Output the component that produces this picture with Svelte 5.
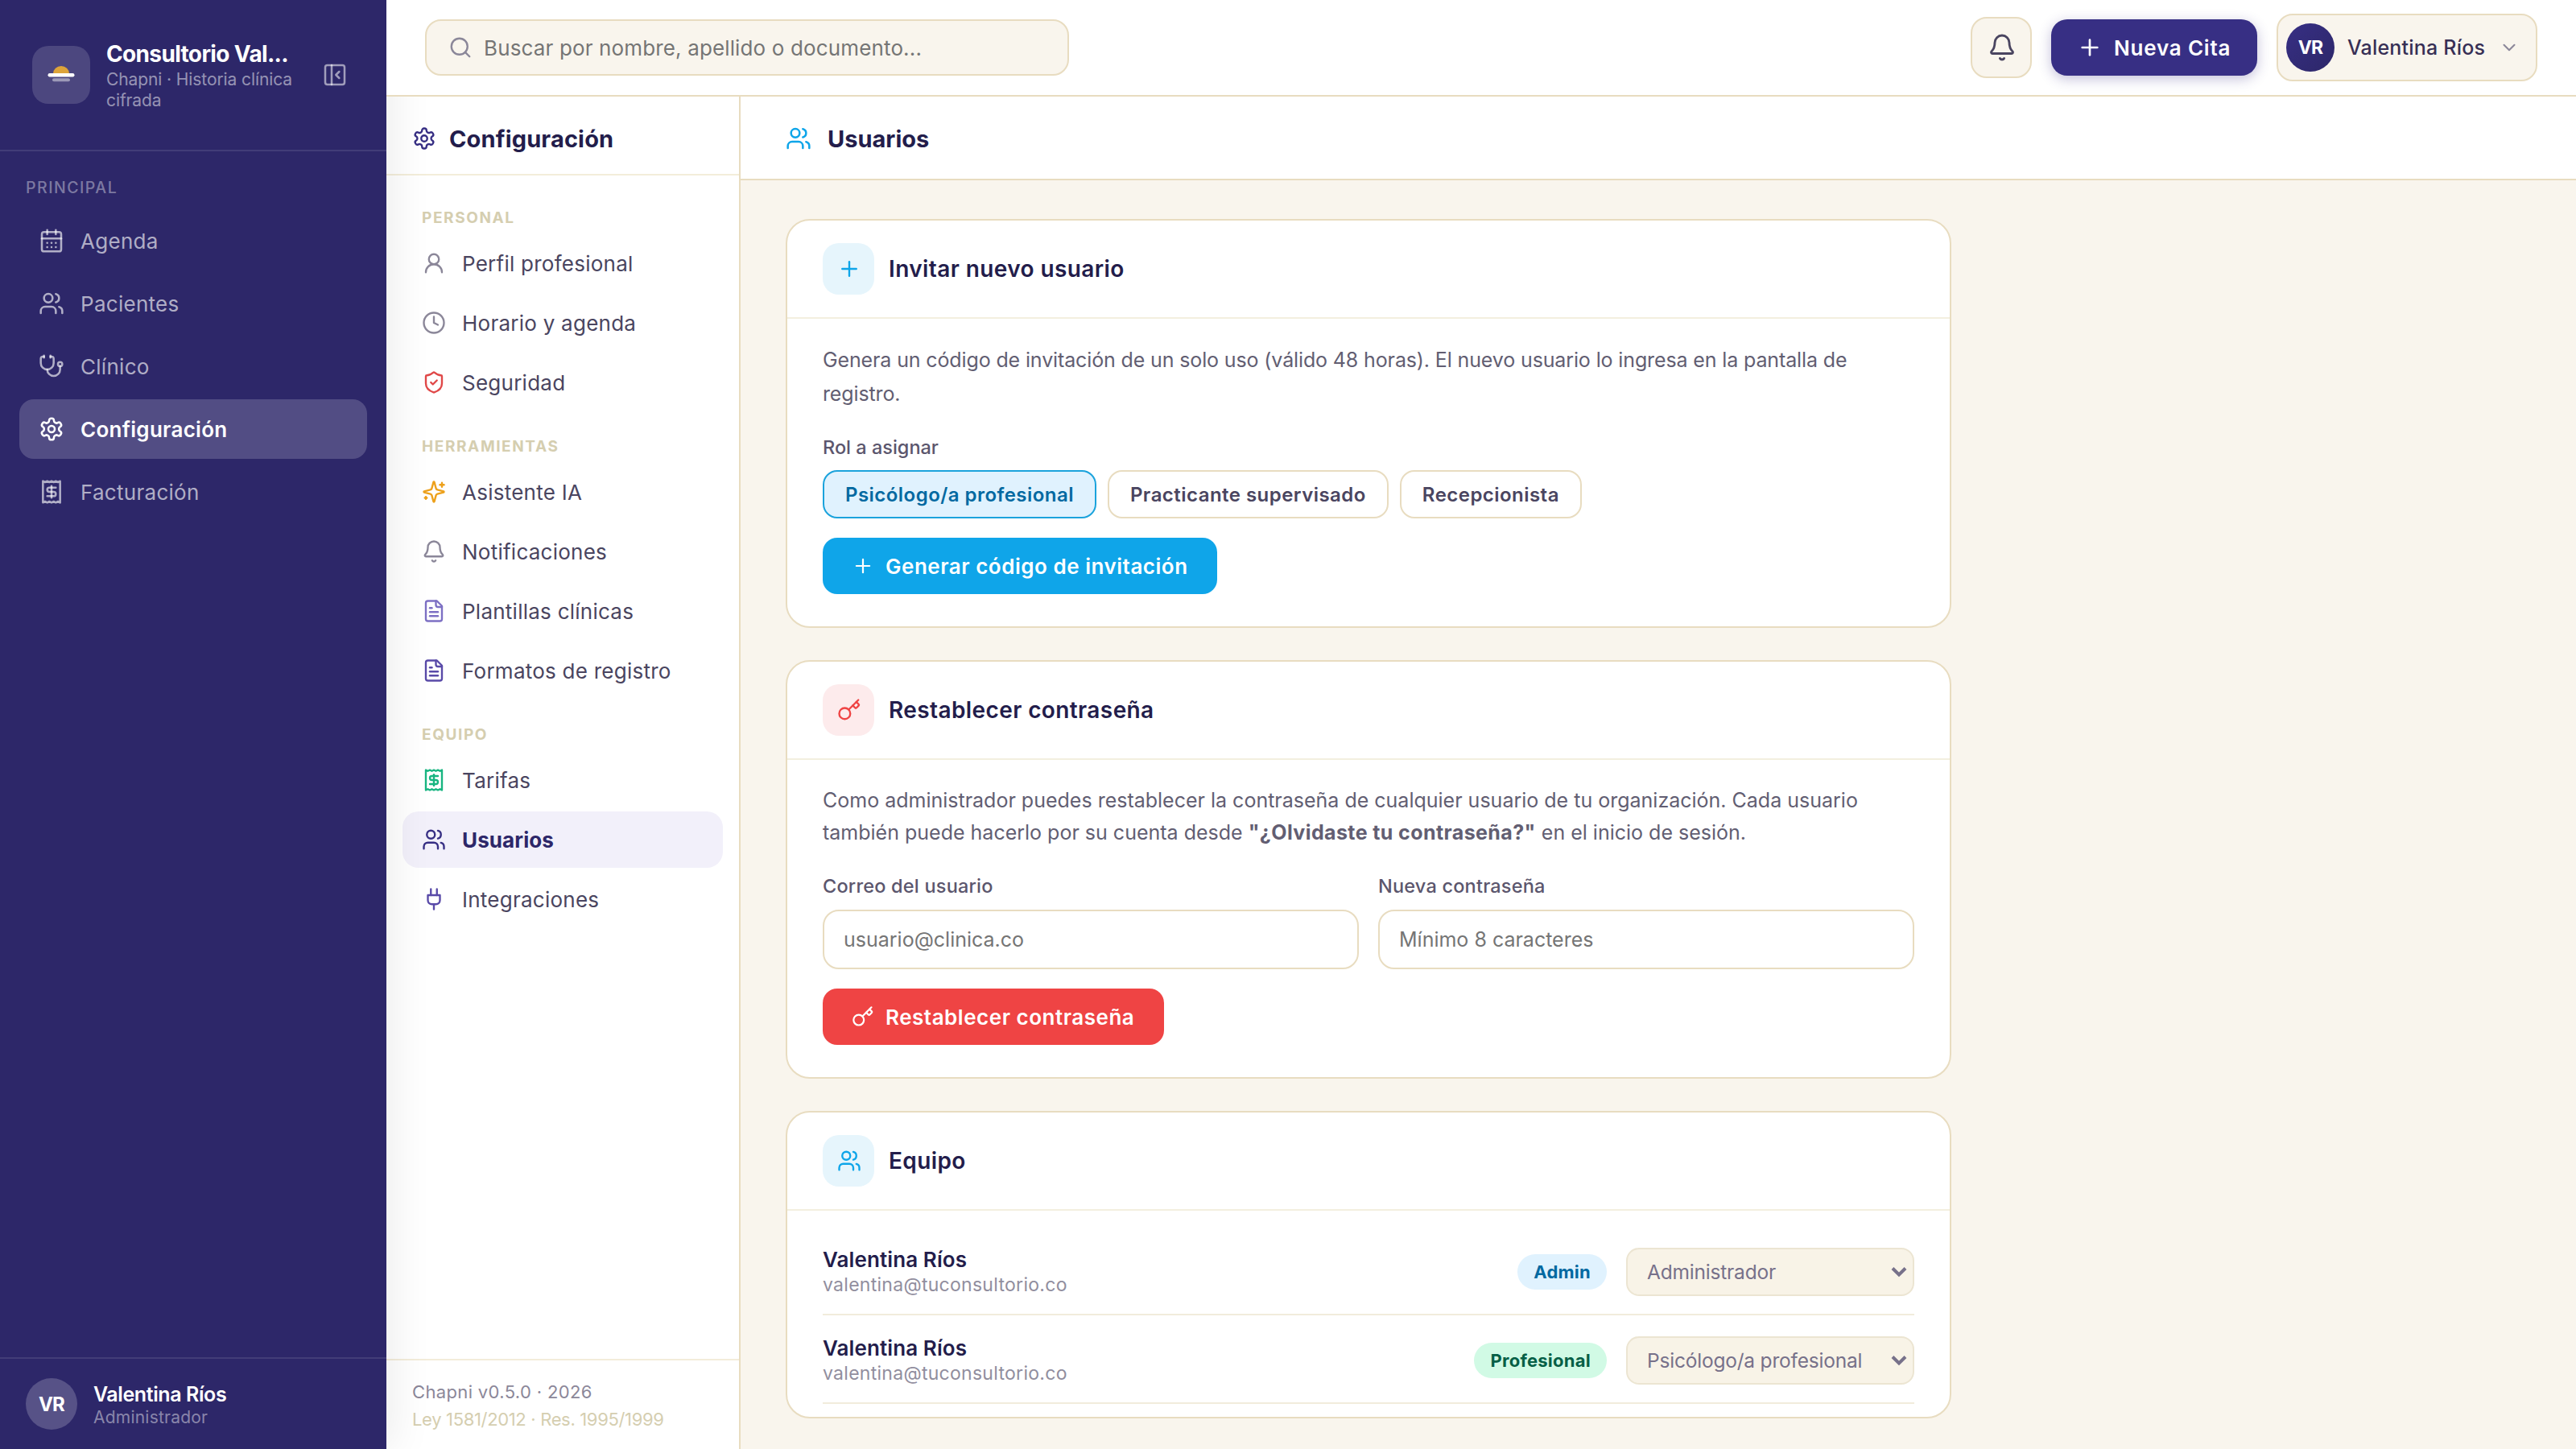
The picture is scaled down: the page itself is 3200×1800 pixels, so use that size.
<script lang="ts">
    type Item = { label: string; icon: string; color?: string; active?: boolean };

    const icons: Record<string, string> = {
        calendar:
            '<path d="M8 2v4"/><path d="M16 2v4"/><rect width="18" height="18" x="3" y="4" rx="2"/><path d="M3 10h18"/><path d="M8 14h.01"/><path d="M12 14h.01"/><path d="M16 14h.01"/><path d="M8 18h.01"/><path d="M12 18h.01"/><path d="M16 18h.01"/>',
        users: '<path d="M16 21v-2a4 4 0 0 0-4-4H6a4 4 0 0 0-4 4v2"/><circle cx="9" cy="7" r="4"/><path d="M22 21v-2a4 4 0 0 0-3-3.87"/><path d="M16 3.13a4 4 0 0 1 0 7.75"/>',
        stethoscope:
            '<path d="M11 2v2"/><path d="M5 2v2"/><path d="M5 3H4a2 2 0 0 0-2 2v4a6 6 0 0 0 12 0V5a2 2 0 0 0-2-2h-1"/><path d="M8 15a6 6 0 0 0 12 0v-3"/><circle cx="20" cy="10" r="2"/>',
        settings:
            '<path d="M12.22 2h-.44a2 2 0 0 0-2 2v.18a2 2 0 0 1-1 1.73l-.43.25a2 2 0 0 1-2 0l-.15-.08a2 2 0 0 0-2.73.73l-.22.38a2 2 0 0 0 .73 2.73l.15.1a2 2 0 0 1 1 1.72v.51a2 2 0 0 1-1 1.74l-.15.09a2 2 0 0 0-.73 2.73l.22.38a2 2 0 0 0 2.73.73l.15-.08a2 2 0 0 1 2 0l.43.25a2 2 0 0 1 1 1.73V20a2 2 0 0 0 2 2h.44a2 2 0 0 0 2-2v-.18a2 2 0 0 1 1-1.73l.43-.25a2 2 0 0 1 2 0l.15.08a2 2 0 0 0 2.73-.73l.22-.39a2 2 0 0 0-.73-2.73l-.15-.08a2 2 0 0 1-1-1.74v-.5a2 2 0 0 1 1-1.74l.15-.09a2 2 0 0 0 .73-2.73l-.22-.38a2 2 0 0 0-2.73-.73l-.15.08a2 2 0 0 1-2 0l-.43-.25a2 2 0 0 1-1-1.73V4a2 2 0 0 0-2-2z"/><circle cx="12" cy="12" r="3"/>',
        receipt:
            '<path d="M4 2v20l2-1 2 1 2-1 2 1 2-1 2 1 2-1 2 1V2l-2 1-2-1-2 1-2-1-2 1-2-1-2 1Z"/><path d="M16 8h-6a2 2 0 1 0 0 4h4a2 2 0 1 1 0 4H8"/><path d="M12 17.5v-11"/>',
        panel: '<rect width="18" height="18" x="3" y="3" rx="2"/><path d="M9 3v18"/><path d="m16 15-3-3 3-3"/>',
        search: '<circle cx="11" cy="11" r="8"/><path d="m21 21-4.3-4.3"/>',
        bell: '<path d="M10.268 21a2 2 0 0 0 3.464 0"/><path d="M3.262 15.326A1 1 0 0 0 4 17h16a1 1 0 0 0 .74-1.673C19.41 13.956 18 12.499 18 8A6 6 0 0 0 6 8c0 4.499-1.411 5.956-2.738 7.326"/>',
        plus: '<path d="M5 12h14"/><path d="M12 5v14"/>',
        chevron: '<path d="m6 9 6 6 6-6"/>',
        user: '<circle cx="12" cy="8" r="5"/><path d="M20 21a8 8 0 0 0-16 0"/>',
        clock: '<circle cx="12" cy="12" r="10"/><path d="M12 6v6l4 2"/>',
        shield: '<path d="M20 13c0 5-3.5 7.5-7.66 8.95a1 1 0 0 1-.67-.01C7.5 20.5 4 18 4 13V6a1 1 0 0 1 1-1c2 0 4.5-1.2 6.24-2.72a1.17 1.17 0 0 1 1.52 0C14.51 3.81 17 5 19 5a1 1 0 0 1 1 1z"/><path d="m9 12 2 2 4-4"/>',
        sparkles:
            '<path d="M9.937 15.5A2 2 0 0 0 8.5 14.063l-6.135-1.582a.5.5 0 0 1 0-.962L8.5 9.936A2 2 0 0 0 9.937 8.5l1.582-6.135a.5.5 0 0 1 .963 0L14.063 8.5A2 2 0 0 0 15.5 9.937l6.135 1.581a.5.5 0 0 1 0 .964L15.5 14.063a2 2 0 0 0-1.437 1.437l-1.582 6.135a.5.5 0 0 1-.963 0z"/><path d="M20 3v4"/><path d="M22 5h-4"/><path d="M4 17v2"/><path d="M5 18H3"/>',
        file: '<path d="M15 2H6a2 2 0 0 0-2 2v16a2 2 0 0 0 2 2h12a2 2 0 0 0 2-2V7Z"/><path d="M14 2v4a2 2 0 0 0 2 2h4"/><path d="M10 9H8"/><path d="M16 13H8"/><path d="M16 17H8"/>',
        plug: '<path d="M12 22v-5"/><path d="M9 8V2"/><path d="M15 8V2"/><path d="M18 8v5a4 4 0 0 1-4 4h-4a4 4 0 0 1-4-4V8Z"/>',
        key: '<circle cx="7.5" cy="15.5" r="5.5"/><path d="m21 2-9.6 9.6"/><path d="m15.5 7.5 2.3 2.3a1 1 0 0 0 1.4 0l2.1-2.1a1 1 0 0 0 0-1.4L19 4"/>',
    };

    const nav: Item[] = [
        { label: "Agenda", icon: "calendar" },
        { label: "Pacientes", icon: "users" },
        { label: "Clínico", icon: "stethoscope" },
        { label: "Configuración", icon: "settings", active: true },
        { label: "Facturación", icon: "receipt" },
    ];

    const groups: { title: string; items: Item[] }[] = [
        {
            title: "Personal",
            items: [
                { label: "Perfil profesional", icon: "user", color: "#8b8799" },
                { label: "Horario y agenda", icon: "clock", color: "#8b8799" },
                { label: "Seguridad", icon: "shield", color: "#e04848" },
            ],
        },
        {
            title: "Herramientas",
            items: [
                { label: "Asistente IA", icon: "sparkles", color: "#eda11c" },
                { label: "Notificaciones", icon: "bell", color: "#8b8799" },
                { label: "Plantillas clínicas", icon: "file", color: "#7d70c4" },
                { label: "Formatos de registro", icon: "file", color: "#594aa8" },
            ],
        },
        {
            title: "Equipo",
            items: [
                { label: "Tarifas", icon: "receipt", color: "#18b581" },
                { label: "Usuarios", icon: "users", color: "#372f84", active: true },
                { label: "Integraciones", icon: "plug", color: "#594aa8" },
            ],
        },
    ];

    const team = [
        { badge: "Admin", kind: "admin", role: "Administrador" },
        { badge: "Profesional", kind: "pro", role: "Psicólogo/a profesional" },
    ];

    const roles = [
        "Psicólogo/a profesional",
        "Practicante supervisado",
        "Recepcionista",
    ];
    let role = $state(roles[0]);
</script>

{#snippet icon(name: string, size: number, stroke = 1.9)}
    <svg
        class="icon"
        width={size}
        height={size}
        viewBox="0 0 24 24"
        fill="none"
        stroke="currentColor"
        stroke-width={stroke}
        stroke-linecap="round"
        stroke-linejoin="round"
    >
        {@html icons[name]}
    </svg>
{/snippet}

{#snippet cardHead(name: string, title: string, tone: string)}
    <header class="card-head">
        <span class="tile {tone}">{@render icon(name, 30)}</span>
        <h2>{title}</h2>
    </header>
{/snippet}

<div class="app">
    <aside class="sidebar">
        <div class="brand">
            <div class="logo">
                <svg width="40" height="24" viewBox="0 0 40 24">
                    <path d="M10 10.5a10 9.5 0 0 1 20 0z" fill="#dda43a" />
                    <rect x="3.5" y="10" width="33" height="4.4" rx="2.2" fill="#fff" />
                    <rect x="9" y="16.2" width="22" height="4" rx="2" fill="#fff" opacity="0.45" />
                </svg>
            </div>
            <div class="brand-text">
                <strong>Consultorio Val...</strong>
                <span>Chapni · Historia clínica<br />cifrada</span>
            </div>
            <span class="collapse">{@render icon("panel", 32)}</span>
        </div>
        <nav class="nav">
            <div class="nav-title">PRINCIPAL</div>
            {#each nav as item}
                <div class="nav-item" class:active={item.active}>
                    {@render icon(item.icon, 32)}
                    <span>{item.label}</span>
                </div>
            {/each}
        </nav>
        <div class="account">
            <span class="account-avatar">VR</span>
            <div class="account-text">
                <strong>Valentina Ríos</strong>
                <span>Administrador</span>
            </div>
        </div>
    </aside>

    <div class="page">
        <header class="topbar">
            <div class="search">
                {@render icon("search", 30)}
                <span>Buscar por nombre, apellido o documento...</span>
            </div>
            <div class="actions">
                <div class="bell">{@render icon("bell", 36)}</div>
                <div class="new">
                    {@render icon("plus", 32, 2)}
                    <span>Nueva Cita</span>
                </div>
                <div class="user">
                    <span class="user-avatar">VR</span>
                    <span class="user-name">Valentina Ríos</span>
                    {@render icon("chevron", 26)}
                </div>
            </div>
        </header>

        <div class="body">
            <aside class="settings">
                <div class="settings-head">
                    {@render icon("settings", 30)}
                    <span>Configuración</span>
                </div>
                <div class="settings-list">
                    {#each groups as group}
                        <div class="group-title">{group.title}</div>
                        {#each group.items as item}
                            <div class="entry" class:active={item.active}>
                                <span class="entry-icon" style="color: {item.color}">
                                    {@render icon(item.icon, 30)}
                                </span>
                                <span>{item.label}</span>
                            </div>
                        {/each}
                    {/each}
                </div>
                <div class="settings-foot">
                    <span class="version">Chapni v0.5.0 · 2026</span>
                    <span class="law">Ley 1581/2012 · Res. 1995/1999</span>
                </div>
            </aside>

            <main class="main">
                <div class="main-head">
                    {@render icon("users", 32)}
                    <h1>Usuarios</h1>
                </div>
                <div class="cards">
                    <section class="card">
                        {@render cardHead("plus", "Invitar nuevo usuario", "sky")}
                        <div class="card-body">
                            <p class="intro">
                                Genera un código de invitación de un solo uso (válido 48 horas). El nuevo usuario lo ingresa en la pantalla de<br />registro.
                            </p>
                            <div class="label role-label">Rol a asignar</div>
                            <div class="chips">
                                {#each roles as r}
                                    <button class="chip" class:selected={r === role} onclick={() => (role = r)}>{r}</button>
                                {/each}
                            </div>
                            <div class="btn primary">
                                {@render icon("plus", 28)}
                                <span>Generar código de invitación</span>
                            </div>
                        </div>
                    </section>

                    <section class="card">
                        {@render cardHead("key", "Restablecer contraseña", "rose")}
                        <div class="card-body">
                            <p class="reset-text">
                                Como administrador puedes restablecer la contraseña de cualquier usuario de tu organización. Cada usuario<br />también puede hacerlo por su cuenta desde <b>"¿Olvidaste tu contraseña?"</b> en el inicio de sesión.
                            </p>
                            <div class="fields">
                                <label class="field">
                                    <span class="label">Correo del usuario</span>
                                    <input type="email" placeholder="usuario@clinica.co" />
                                </label>
                                <label class="field">
                                    <span class="label">Nueva contraseña</span>
                                    <input type="password" placeholder="Mínimo 8 caracteres" />
                                </label>
                            </div>
                            <div class="btn danger">
                                {@render icon("key", 28)}
                                <span>Restablecer contraseña</span>
                            </div>
                        </div>
                    </section>

                    <section class="card">
                        {@render cardHead("users", "Equipo", "sky")}
                        <div class="team">
                            {#each team as member}
                                <div class="member">
                                    <div class="member-info">
                                        <strong>Valentina Ríos</strong>
                                        <span>valentina@tuconsultorio.co</span>
                                    </div>
                                    <span class="badge {member.kind}">{member.badge}</span>
                                    <div class="select">
                                        <span>{member.role}</span>
                                        <svg width="20" height="14" viewBox="0 0 20 14" fill="none" stroke="currentColor" stroke-width="4">
                                            <path d="M2 2.5l8 8 8-8" />
                                        </svg>
                                    </div>
                                </div>
                            {/each}
                        </div>
                    </section>
                </div>
            </main>
        </div>
    </div>
</div>

<style>
    :global(body) {
        margin: 0;
    }
    .app {
        display: flex;
        width: 3200px;
        height: 1800px;
        overflow: hidden;
        background: #f9f5ed;
        color: #231d4b;
        font-family: Inter, "Open Sans", sans-serif;
        font-size: 26px;
        white-space: nowrap;
    }
    .app *,
    .app {
        box-sizing: border-box;
    }
    h1,
    h2,
    p {
        margin: 0;
    }
    .icon {
        display: block;
        flex: none;
    }

    /* sidebar */
    .sidebar {
        position: relative;
        z-index: 1;
        display: flex;
        flex-direction: column;
        width: 480px;
        flex: none;
        background: #2d2769;
        color: #fff;
        box-shadow: 8px 0 48px rgba(0, 0, 0, 0.08);
    }
    .brand {
        display: flex;
        align-items: center;
        height: 188px;
        padding: 0 48px 0 40px;
        border-bottom: 2px solid rgba(255, 255, 255, 0.1);
    }
    .logo {
        display: flex;
        align-items: center;
        justify-content: center;
        width: 72px;
        height: 72px;
        border-radius: 20px;
        background: rgba(255, 255, 255, 0.15);
    }
    .brand-text {
        display: flex;
        flex-direction: column;
        flex: 1;
        margin-left: 20px;
    }
    .brand-text strong {
        font-size: 28px;
        font-weight: 700;
        line-height: 36px;
        letter-spacing: -0.65px;
    }
    .brand-text span {
        margin-top: 1px;
        color: rgba(255, 255, 255, 0.5);
        font-size: 21px;
        line-height: 26px;
        letter-spacing: -0.1px;
    }
    .collapse {
        color: rgba(255, 255, 255, 0.55);
    }
    .nav {
        display: flex;
        flex-direction: column;
        gap: 4px;
        flex: 1;
        padding: 30px 24px 0;
    }
    .nav-title {
        height: 40px;
        padding-left: 8px;
        color: rgba(255, 255, 255, 0.4);
        font-size: 19.5px;
        font-weight: 500;
        line-height: 31px;
        letter-spacing: 1.5px;
    }
    .nav-item {
        display: flex;
        align-items: center;
        gap: 20px;
        height: 74px;
        padding: 0 24px;
        border-radius: 18px;
        color: rgba(255, 255, 255, 0.63);
        font-size: 26px;
        letter-spacing: 0.28px;
    }
    .nav-item.active {
        background: rgba(255, 255, 255, 0.18);
        color: #fff;
        font-weight: 600;
    }
    .account {
        display: flex;
        align-items: center;
        gap: 20px;
        height: 114px;
        padding: 0 32px;
        border-top: 2px solid rgba(255, 255, 255, 0.1);
    }
    .account-avatar {
        display: flex;
        align-items: center;
        justify-content: center;
        width: 64px;
        height: 64px;
        border-radius: 50%;
        background: rgba(255, 255, 255, 0.2);
        font-size: 24px;
        font-weight: 700;
        letter-spacing: -0.8px;
    }
    .account-text {
        display: flex;
        flex-direction: column;
        padding-top: 4px;
    }
    .account-text strong {
        font-size: 25px;
        font-weight: 600;
        line-height: 30px;
        letter-spacing: -0.4px;
    }
    .account-text span {
        color: rgba(255, 255, 255, 0.45);
        font-size: 21px;
        line-height: 28px;
        letter-spacing: 0.22px;
    }

    /* top bar */
    .page {
        display: flex;
        flex-direction: column;
        flex: 1;
    }
    .topbar {
        position: relative;
        z-index: 2;
        display: flex;
        align-items: center;
        justify-content: space-between;
        height: 120px;
        padding: 0 48px;
        border-bottom: 2px solid #e8dcc0;
        background: #fff;
    }
    .search {
        display: flex;
        align-items: center;
        gap: 14px;
        width: 800px;
        height: 70px;
        padding-left: 27px;
        border: 2px solid #e8dcc0;
        border-radius: 20px;
        background: #f9f5ed;
        color: #8b8799;
    }
    .search span {
        color: #757575;
        font-size: 26px;
        letter-spacing: 0.14px;
    }
    .actions {
        display: flex;
        align-items: center;
        gap: 24px;
    }
    .bell {
        display: flex;
        align-items: center;
        justify-content: center;
        width: 76px;
        height: 76px;
        padding-left: 2px;
        border: 2px solid #e8dcc0;
        border-radius: 20px;
        background: #f9f5ed;
        color: #4a4560;
    }
    .new {
        display: flex;
        align-items: center;
        gap: 14px;
        width: 256px;
        height: 70px;
        padding-left: 32px;
        border-radius: 20px;
        background: #372f84;
        color: #fff;
        font-size: 26px;
        font-weight: 600;
        letter-spacing: 0.8px;
        box-shadow: 0 4px 16px rgba(55, 47, 132, 0.3);
    }
    .user {
        display: flex;
        align-items: center;
        width: 324px;
        height: 84px;
        padding: 0 20px 0 10px;
        border: 2px solid #e8dcc0;
        border-radius: 20px;
        background: #f9f5ed;
        color: #8b8799;
    }
    .user-avatar {
        display: flex;
        align-items: center;
        justify-content: center;
        width: 60px;
        height: 60px;
        border-radius: 50%;
        background: linear-gradient(135deg, #372f84, #2d2769);
        color: #fff;
        font-size: 23px;
        font-weight: 700;
        letter-spacing: -0.8px;
    }
    .user-name {
        flex: 1;
        margin-left: 16px;
        color: #372f55;
        font-size: 25px;
        font-weight: 500;
        letter-spacing: 0.2px;
    }

    /* settings column */
    .body {
        display: flex;
        flex: 1;
        min-height: 0;
    }
    .settings {
        display: flex;
        flex-direction: column;
        width: 440px;
        flex: none;
        border-right: 2px solid #e8dcc0;
        background: #fff;
    }
    .settings-head {
        display: flex;
        align-items: center;
        gap: 16px;
        height: 98px;
        padding: 8px 32px 0;
        border-bottom: 2px solid #f3edda;
        color: #372f84;
    }
    .settings-head span {
        color: #231d4b;
        font-size: 29px;
        font-weight: 700;
        letter-spacing: 0.15px;
    }
    .settings-list {
        display: flex;
        flex-direction: column;
        gap: 4px;
        flex: 1;
        padding: 12px 20px 0;
    }
    .group-title {
        height: 58px;
        padding: 26px 24px 0;
        color: #d5ceb0;
        font-size: 19px;
        font-weight: 700;
        line-height: 30px;
        letter-spacing: 1.6px;
        text-transform: uppercase;
    }
    .entry {
        display: flex;
        align-items: center;
        gap: 20px;
        height: 70px;
        padding: 0 24px;
        border-radius: 20px;
        color: #4a4560;
        font-size: 26px;
        letter-spacing: 0.25px;
    }
    .entry.active {
        background: #f2f0fa;
        color: #2d2769;
        font-weight: 700;
        letter-spacing: 0.1px;
    }
    .settings-foot {
        display: flex;
        flex-direction: column;
        height: 112px;
        padding: 22px 32px 0;
        border-top: 2px solid #f3edda;
        color: #8b8799;
        font-size: 22px;
        line-height: 34px;
    }
    .version {
        letter-spacing: 0.35px;
    }
    .law {
        color: #d5ceb0;
        letter-spacing: -0.34px;
    }

    /* main column */
    .main {
        flex: 1;
        min-width: 0;
    }
    .main-head {
        display: flex;
        align-items: center;
        gap: 20px;
        height: 104px;
        padding: 2px 56px 0;
        border-bottom: 2px solid #e8dcc0;
        background: #fff;
        color: #0ea5e9;
    }
    h1 {
        color: #231d4b;
        font-size: 29px;
        font-weight: 700;
    }
    .cards {
        display: flex;
        flex-direction: column;
        gap: 40px;
        width: 1560px;
        padding: 48px 56px;
    }
    .card {
        border: 2px solid #e8dcc0;
        border-radius: 30px;
        background: #fff;
    }
    .card-head {
        display: flex;
        align-items: center;
        gap: 18px;
        height: 122px;
        padding: 0 44px;
        border-bottom: 2px solid #f3efdf;
    }
    h2 {
        font-size: 28px;
        font-weight: 600;
        letter-spacing: 0.4px;
    }
    .tile {
        display: flex;
        align-items: center;
        justify-content: center;
        width: 64px;
        height: 64px;
        padding-left: 2px;
        border-radius: 20px;
    }
    .tile.sky {
        background: #e6f5fc;
        color: #0ea5e9;
    }
    .tile.rose {
        background: #fdebec;
        color: #ef4444;
    }
    .card-body {
        display: flex;
        flex-direction: column;
        align-items: flex-start;
        padding: 30px 44px 40px;
    }
    p {
        color: #625e72;
        font-size: 25px;
    }
    .intro {
        line-height: 42px;
        letter-spacing: -0.13px;
    }
    .reset-text {
        line-height: 40px;
    }
    .reset-text b {
        letter-spacing: 0.4px;
    }
    .label {
        color: #5b566d;
        font-size: 23.5px;
        font-weight: 500;
        line-height: 30px;
        letter-spacing: 0.2px;
    }
    .role-label {
        margin: 31px 0 13px;
        letter-spacing: 0;
    }
    .chips {
        display: flex;
        gap: 14px;
        margin-bottom: 24px;
    }
    .chip {
        height: 60px;
        padding: 0 26px;
        border: 2px solid #e8dcc0;
        border-radius: 18px;
        background: #fff;
        color: #4a4560;
        font-family: inherit;
        font-size: 24px;
        font-weight: 600;
        letter-spacing: 0.46px;
    }
    .chip.selected {
        border-color: #1ba3dc;
        background: #e0f2fe;
        color: #0369a1;
    }
    .btn {
        display: flex;
        align-items: center;
        gap: 14px;
        height: 70px;
        padding: 0 36px;
        border-radius: 18px;
        color: #fff;
        font-size: 26px;
        font-weight: 600;
        letter-spacing: 0.52px;
    }
    .primary {
        width: 490px;
        background: #0fa5e9;
    }
    .danger {
        width: 424px;
        background: #ef4444;
    }
    .fields {
        display: grid;
        grid-template-columns: 1fr 1fr;
        gap: 24px;
        width: 100%;
        margin: 32px 0 24px;
    }
    .field {
        display: flex;
        flex-direction: column;
        gap: 14px;
    }
    input {
        height: 74px;
        padding: 0 24px;
        border: 2px solid #e8dcc0;
        border-radius: 20px;
        background: #fff;
        font-family: inherit;
        font-size: 25px;
    }
    input::placeholder {
        color: #757575;
    }

    /* team list */
    .team {
        padding: 20px 44px 16px;
    }
    .member {
        display: flex;
        align-items: center;
        gap: 24px;
        height: 110px;
        padding-top: 4px;
        border-bottom: 2px solid #f1ecdc;
    }
    .member-info {
        display: flex;
        flex-direction: column;
        flex: 1;
    }
    .member-info strong {
        font-size: 26px;
        font-weight: 600;
        line-height: 32px;
        letter-spacing: 0.1px;
    }
    .member-info span {
        color: #918e9e;
        font-size: 23px;
        line-height: 31px;
        letter-spacing: 0.28px;
    }
    .badge {
        height: 44px;
        padding: 0 20px;
        border-radius: 22px;
        font-size: 22px;
        font-weight: 700;
        line-height: 44px;
        letter-spacing: 0.25px;
    }
    .badge.admin {
        background: #e0f2fe;
        color: #0369a1;
    }
    .badge.pro {
        background: #d1fae5;
        color: #065f46;
    }
    .select {
        display: flex;
        align-items: center;
        justify-content: space-between;
        width: 358px;
        height: 60px;
        padding: 0 7px 0 24px;
        border: 2px solid #ece5d2;
        border-radius: 16px;
        background: #f8f3e7;
        color: #77718a;
        font-size: 24.5px;
        letter-spacing: -0.2px;
    }
</style>
